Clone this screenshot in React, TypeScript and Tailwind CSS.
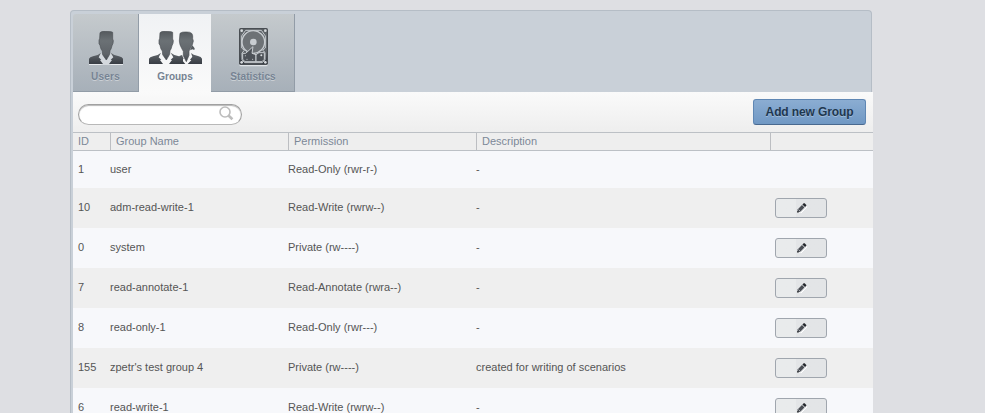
import React from "react";

type Group = { id: string; name: string; permission: string; description: string; editable: boolean };

const groups: Group[] = [
  { id: "1", name: "user", permission: "Read-Only (rwr-r-)", description: "-", editable: false },
  { id: "10", name: "adm-read-write-1", permission: "Read-Write (rwrw--)", description: "-", editable: true },
  { id: "0", name: "system", permission: "Private (rw----)", description: "-", editable: true },
  { id: "7", name: "read-annotate-1", permission: "Read-Annotate (rwra--)", description: "-", editable: true },
  { id: "8", name: "read-only-1", permission: "Read-Only (rwr---)", description: "-", editable: true },
  { id: "155", name: "zpetr's test group 4", permission: "Private (rw----)", description: "created for writing of scenarios", editable: true },
  { id: "6", name: "read-write-1", permission: "Read-Write (rwrw--)", description: "-", editable: true },
];

function IconGradient({ id }: { id: string }) {
  return (
    <linearGradient id={id} x1="0" y1="0" x2="0" y2="99" gradientUnits="userSpaceOnUse">
      <stop offset="0" stopColor="#54595d" />
      <stop offset="0.3" stopColor="#6b7175" />
      <stop offset="0.7" stopColor="#5e6368" />
      <stop offset="1" stopColor="#383d44" />
    </linearGradient>
  );
}

const manHead = "M33 5Q38 0 50 1L66 2L71 4L71 24L73 29L72 37L69 44L66 54L63 59L62 70L52 87L41 71L40 60L36 54L33 43L30 38L30 28L32 22Z";
const leftShoulder = "M0 99V83Q2 78 12 76L26 72L36 65L29 79L37 86L33 87L42 99Z";
const rightShoulder = "M102 99V83Q100 78 90 76L76 72L65 65L73 79L65 86L69 87L60 99Z";

function UserIcon() {
  return (
    <svg className="block h-[34px] w-[34px]" viewBox="0 0 102 102">
      <defs><IconGradient id="user-fill" /></defs>
      <path d="M0 99H102V102H0Z" fill="#e6e9ec" />
      <path d="M26 73L36 65L52 88L65 65L76 73L64 102H38Z" fill="#d3d8dd" />
      <path d={leftShoulder + rightShoulder} fill="url(#user-fill)" />
      <path d={manHead} fill="url(#user-fill)" stroke="#4b5054" strokeWidth="2" />
    </svg>
  );
}

function GroupIcon() {
  return (
    <svg className="block h-[34px] w-[53px]" viewBox="0 0 159 102">
      <defs><IconGradient id="group-fill" /></defs>
      <path d={leftShoulder + rightShoulder} fill="url(#group-fill)" />
      <path d={manHead} fill="url(#group-fill)" stroke="#4b5054" strokeWidth="2" />
      <path d="M91 75L99 72L104 83L98 86L109 99H90ZM159 99V83Q157 77 147 75L134 71L126 66L130 77L123 86L127 88L116 99Z" fill="url(#group-fill)" />
      <path d="M93 7Q100 2 111 3Q124 2 129 8Q132 13 131 23L133 30L130 41L124 52L120 60L120 73L112 92L103 74L103 61L98 52L93 41L91 30Z" fill="url(#group-fill)" stroke="#4b5054" strokeWidth="2" />
      <path d="M130 43L137 52L136 57L130 55L124 58L124 54Z" fill="#555a5f" />
    </svg>
  );
}

function DiskIcon() {
  return (
    <svg className="block h-[39px] w-[29px]" viewBox="0 0 87 117">
      <defs><IconGradient id="disk-fill" /></defs>
      <rect x="1" y="5" width="85" height="110" rx="5" fill="#dfe3e7" />
      <rect x="0" y="0" width="87" height="111" rx="5" fill="#494e53" />
      <rect x="3" y="3" width="81" height="105" rx="3" fill="url(#disk-fill)" />
      <path d="M20 7H67L79 24V60L71 67L78 73V95L70 104H17L9 95V75L16 67L8 60V24Z" fill="#5d6267" stroke="#c5cace" strokeWidth="3" />
      <circle cx="43" cy="42" r="34" fill="#6d7276" stroke="#c8cdd1" strokeWidth="4" />
      <circle cx="43" cy="42" r="10" fill="#c8cdd1" />
      <path d="M11 76H20L42 56L39 76L51 80V101H18L11 94Z" fill="#4d5258" stroke="#c8cdd1" strokeWidth="3" />
      <path d="M51 80L60 74H76V94L69 101H51Z" fill="#4d5258" stroke="#c8cdd1" strokeWidth="3" />
      <g fill="#d8dcdf">
        <circle cx="8" cy="8" r="4" /><circle cx="79" cy="8" r="4" />
        <circle cx="8" cy="103" r="4" /><circle cx="79" cy="103" r="4" />
        <circle cx="19" cy="83" r="1.6" /><circle cx="24" cy="94" r="1.6" />
        <circle cx="41" cy="94" r="1.6" /><circle cx="67" cy="82" r="3" />
      </g>
    </svg>
  );
}

function PencilIcon() {
  return (
    <svg className="ml-px block h-[10px] w-[10px]" viewBox="0 0 10 10">
      <path d="M1 10H4L10 4V3" fill="none" stroke="#fff" />
      <path d="M0.3 9.4L0.8 6.2L5 2L7.4 4.4L3.2 8.7Z" fill="#4a4e55" />
      <path d="M5.4 1.6L6.7 0.3H7.7L9.3 2V2.8L8 4.1Z" fill="#24272c" />
      <path d="M0.3 9.5V7.7L2 9.3Z" fill="#17191c" />
      <path d="M1.5 6.5L3.2 8.2" stroke="#e8e9eb" strokeWidth="0.6" />
    </svg>
  );
}

const tab = "flex shrink-0 flex-col items-center text-[10px] font-bold leading-3 text-[#768393] [text-shadow:0_1px_0_rgba(255,255,255,0.4)]";
const idleTab = "border-b border-r border-[#929ca7] bg-linear-to-b from-[#c5cacd] to-[#a7b0b9]";
const columns = "grid grid-cols-[37px_178px_188px_294px_103px]";

export default function App() {
  return (
    <div className="h-[413px] w-full overflow-hidden bg-[#dedfe3] pl-[70px] pt-[10px] font-['Liberation_Sans',Arial,sans-serif] text-[11px] text-[#555]">
      <div className="w-[803px]">
        <div className="flex h-[82px] w-[802px] rounded-t-[4px] border border-b-0 border-[#b5bdc6] bg-[#c9d0d8] pl-[2px] pt-[3px]">
          <button className={`${tab} ${idleTab} w-[66px] rounded-tl-[3px] pt-[17px]`}>
            <UserIcon />
            <span className="mt-[6px] tracking-[0.2px]">Users</span>
          </button>
          <button className={`${tab} w-[72px] bg-linear-to-b from-[#f0f2f4] to-[#fafafa] pt-[17px]`}>
            <GroupIcon />
            <span className="mt-[6px]">Groups</span>
          </button>
          <button className={`${tab} ${idleTab} w-[84px] pl-px pt-[14px]`}>
            <DiskIcon />
            <span className="mt-[4px] tracking-[0.1px]">Statistics</span>
          </button>
        </div>
        <div className="border-l border-[#b5bdc6] bg-[#c9d0d8] pl-[2px]">
          <div className="flex h-10 items-start justify-between bg-linear-to-b from-[#fafafa] to-[#eeeeee] pl-[5px] pr-[7px]">
            <div className="mt-[12px] flex h-[21px] w-[164px] items-start rounded-full border border-[#a0a0a0] border-b-[#b8b8b8] bg-white pr-[7px] shadow-[inset_0_1px_1px_#b8b8b8]">
              <input aria-label="Search groups" className="h-full min-w-0 flex-1 bg-transparent pl-2 outline-none" />
              <svg className="mt-px h-[15px] w-[15px]" viewBox="0 0 15 15" fill="none" stroke="#bdbdbd">
                <circle cx="6" cy="6" r="5" strokeWidth="1.6" />
                <path d="M9.5 9.5L13.4 13.2" strokeWidth="2.6" />
              </svg>
            </div>
            <button className="mt-[7px] h-[26px] w-[113px] rounded-[3px] border border-[#5f87b4] border-b-[#49698f] bg-linear-to-b from-[#8badd2] to-[#7098c4] text-[12px] font-bold tracking-[-0.12px] text-[#1e374f] [text-shadow:0_1px_0_rgba(255,255,255,0.3)]">
              Add new Group
            </button>
          </div>
          <div className={`${columns} h-[19px] border-y border-[#bcc0c5] bg-[#eeeeee] leading-[17px] text-[#7c8897]`}>
            <div className="pl-[5px]">ID</div>
            <div className="border-l border-[#bcbec2] pl-[5px]">Group Name</div>
            <div className="border-l border-[#bcbec2] pl-[5px]">Permission</div>
            <div className="border-l border-[#bcbec2] pl-[5px]">Description</div>
            <div className="border-l border-[#bcbec2]" />
          </div>
          {groups.map((group, index) => (
            <div key={group.id} className={`${columns} items-center leading-4 ${index === 0 ? "h-[37px]" : "h-10"} ${index % 2 ? "bg-[#efefef]" : "bg-[#f7f8fb]"}`}>
              <div className="pb-[2px] pl-[5px]">{group.id}</div>
              <div className="pb-[2px]">{group.name}</div>
              <div className="pb-[2px]">{group.permission}</div>
              <div className="pb-[2px]">{group.description}</div>
              <div className="pl-[5px]">
                {group.editable && (
                  <button aria-label={`Edit ${group.name}`} className="flex h-5 w-[52px] items-center justify-center rounded-[3px] border border-[#a0a6ae] bg-[#e3e5e7] bg-linear-to-r from-[#e9ebec] from-40% to-[#e3e5e7] to-40%">
                    <PencilIcon />
                  </button>
                )}
              </div>
            </div>
          ))}
        </div>
      </div>
    </div>
  );
}
